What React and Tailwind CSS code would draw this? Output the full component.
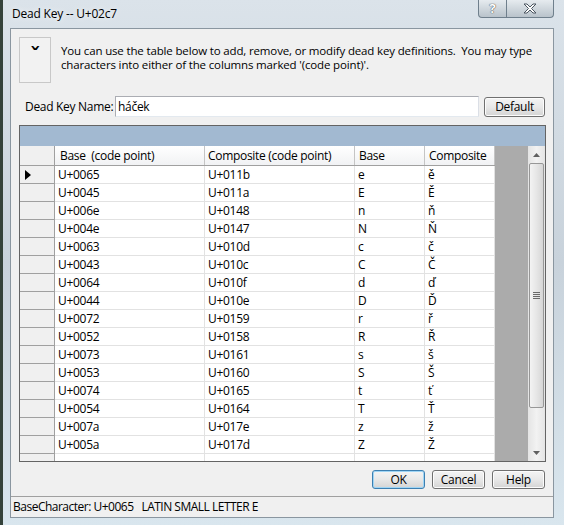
import React from 'react'

const rows = [
  ['U+0065', 'U+011b', 'e', 'ě'],
  ['U+0045', 'U+011a', 'E', 'Ě'],
  ['U+006e', 'U+0148', 'n', 'ň'],
  ['U+004e', 'U+0147', 'N', 'Ň'],
  ['U+0063', 'U+010d', 'c', 'č'],
  ['U+0043', 'U+010c', 'C', 'Č'],
  ['U+0064', 'U+010f', 'd', 'ď'],
  ['U+0044', 'U+010e', 'D', 'Ď'],
  ['U+0072', 'U+0159', 'r', 'ř'],
  ['U+0052', 'U+0158', 'R', 'Ř'],
  ['U+0073', 'U+0161', 's', 'š'],
  ['U+0053', 'U+0160', 'S', 'Š'],
  ['U+0074', 'U+0165', 't', 'ť'],
  ['U+0054', 'U+0164', 'T', 'Ť'],
  ['U+007a', 'U+017e', 'z', 'ž'],
  ['U+005a', 'U+017d', 'Z', 'Ž'],
]

function WinButton({ label, primary, className = '' }) {
  return (
    <div
      className={`flex items-center justify-center rounded-[3px] border bg-gradient-to-b from-[#f4f4f4] via-[#e8e8e8] to-[#d4d4d4] text-[12px] text-black ${
        primary ? 'border-[#3c7fb1] shadow-[inset_0_0_0_1px_#9fd5f5]' : 'border-[#707070] shadow-[inset_0_0_0_1px_#fcfcfc]'
      } ${className}`}
    >
      {label}
    </div>
  )
}

export default function App() {
  return (
    <div
      className="relative w-[564px] h-[525px] overflow-hidden bg-gradient-to-b from-[#dbe3ea] via-[#c8d2db] to-[#d9e6ee] whitespace-nowrap"
      style={{ fontFamily: '"Open Sans", "Noto Sans", sans-serif' }}
    >
      {/* desktop peeking at the left edge */}
      <div className="absolute left-0 top-0 w-[3px] h-full bg-[#34423a]" />

      {/* title bar */}
      <div className="relative h-[28px] flex items-start">
        <div className="pl-[12px] pt-[6px] text-[12px] leading-[16px] tracking-[-0.2px] text-black [text-shadow:0_0_6px_#ffffff]">
          Dead Key -- U+02c7
        </div>
        <div className="absolute top-0 left-[478px] flex">
          <div className="w-[29px] h-[18px] rounded-bl-[4px] border border-t-0 border-[#6f7f8c] bg-gradient-to-b from-[#e6ebef] to-[#b9c3cb] flex items-center justify-center">
            <span className="text-[13px] font-bold leading-none text-white [text-shadow:0_0_1px_#444,0_0_1px_#444]">?</span>
          </div>
          <div className="w-[47px] h-[18px] rounded-br-[4px] border border-l-0 border-t-0 border-[#6f7f8c] bg-gradient-to-b from-[#e6ebef] to-[#b9c3cb] flex items-center justify-center">
            <svg width="14" height="11" viewBox="0 0 14 11">
              <path d="M1 1h3l3 3 3-3h3l-4.5 4.5L13 10h-3L7 7l-3 3H1l4.5-4.5z" fill="#fff" stroke="#4a5560" strokeWidth="1" strokeLinejoin="round" />
            </svg>
          </div>
        </div>
      </div>

      {/* client area */}
      <div className="ml-[10px] w-[544px] h-[490px] bg-[#f0f0f0] border border-[#8a96a0] flex flex-col text-[12px] tracking-[-0.3px] text-black">
        {/* info */}
        <div className="flex pt-[8px] pl-[8px]">
          <div className="w-[32px] h-[46px] border border-[#c8c8c8] bg-[#f2f2f2] flex justify-center">
            <span
              className="text-[22px] font-bold leading-[22px] mt-[7px]"
              style={{ fontFamily: '"DejaVu Sans", sans-serif' }}
            >
              ˇ
            </span>
          </div>
          <div className="ml-[10px] mt-[7px] text-[11.5px] leading-[14px] tracking-[-0.15px]">
            <div>You can use the table below to add, remove, or modify dead key definitions.&nbsp; You may type</div>
            <div>characters into either of the columns marked '(code point)'.</div>
          </div>
        </div>

        {/* name row */}
        <div className="flex items-center mt-[13px] h-[21px]">
          <div className="pl-[14px] w-[104px]">Dead Key Name:</div>
          <div className="w-[364px] h-[21px] bg-white border border-[#abadb3] border-b-[#e3e9ef] border-r-[#dbdfe6] flex items-center pl-[2px]">
            háček
          </div>
          <WinButton label="Default" className="ml-[5px] w-[61px] h-[20px]" />
        </div>

        {/* grid */}
        <div className="mt-[8px] ml-[8px] w-[527px] h-[337px] border border-[#646464] bg-[#ababab] flex flex-col">
          <div className="h-[20px] bg-[#a2b9d1] shrink-0" />
          <div className="flex flex-1 min-h-0">
            <div className="w-[475px] flex flex-col overflow-hidden bg-white">
              {/* header */}
              <div className="flex h-[20px] shrink-0 border-b border-[#a0a0a0] bg-gradient-to-b from-[#ffffff] to-[#f1f2f4]">
                <div className="w-[35px] border-r border-[#a0a0a0] bg-[#f0f0f0]" />
                <div className="w-[150px] border-r border-[#c5c5c5] pl-[5px] leading-[19px]">Base&nbsp; (code point)</div>
                <div className="w-[150px] border-r border-[#c5c5c5] pl-[3px] leading-[19px]">Composite (code point)</div>
                <div className="w-[70px] border-r border-[#c5c5c5] pl-[4px] leading-[19px]">Base</div>
                <div className="w-[70px] border-r border-[#c5c5c5] pl-[4px] leading-[19px]">Composite</div>
              </div>
              {rows.map((r, i) => (
                <div key={i} className="flex h-[18px] shrink-0">
                  <div className="w-[35px] border-r border-b border-[#a0a0a0] bg-[#f0f0f0] flex items-center pl-[5px]">
                    {i === 0 && (
                      <svg width="6" height="10" viewBox="0 0 6 10">
                        <path d="M0 0l6 5-6 5z" fill="#000" />
                      </svg>
                    )}
                  </div>
                  <div className="w-[150px] border-r border-b border-[#e2e2e2] pl-[3px] leading-[17px]">{r[0]}</div>
                  <div className="w-[150px] border-r border-b border-[#e2e2e2] pl-[3px] leading-[17px]">{r[1]}</div>
                  <div className="w-[70px] border-r border-b border-[#e2e2e2] pl-[3px] leading-[17px]">{r[2]}</div>
                  <div className="w-[70px] border-r border-b border-[#e2e2e2] pl-[3px] leading-[17px]">{r[3]}</div>
                </div>
              ))}
              <div className="flex flex-1">
                <div className="w-[35px] border-r border-[#a0a0a0] bg-[#f0f0f0]" />
                <div className="w-[150px] border-r border-[#e2e2e2]" />
                <div className="w-[150px] border-r border-[#e2e2e2]" />
                <div className="w-[70px] border-r border-[#e2e2e2]" />
                <div className="w-[70px] border-r border-[#e2e2e2]" />
              </div>
            </div>
            <div className="w-[33px] bg-[#ababab]" />
            {/* scrollbar */}
            <div className="w-[17px] bg-gradient-to-r from-[#e4e4e4] via-[#f2f2f2] to-[#e4e4e4] flex flex-col items-center">
              <div className="h-[17px] w-full flex items-center justify-center">
                <svg width="7" height="4" viewBox="0 0 7 4"><path d="M0 4l3.5-4 3.5 4z" fill="#606060" /></svg>
              </div>
              <div className="w-[15px] h-[245px] rounded-[2px] border border-[#979797] bg-gradient-to-r from-[#f3f3f3] via-[#e6e6e6] to-[#d6d6d6] flex items-center justify-center">
                <div className="flex flex-col gap-[1px] mt-[20px]">
                  <div className="w-[7px] h-[1px] bg-[#6a6a6a]" />
                  <div className="w-[7px] h-[1px] bg-[#6a6a6a]" />
                  <div className="w-[7px] h-[1px] bg-[#6a6a6a]" />
                  <div className="w-[7px] h-[1px] bg-[#6a6a6a]" />
                </div>
              </div>
              <div className="flex-1" />
              <div className="h-[17px] w-full flex items-center justify-center">
                <svg width="7" height="4" viewBox="0 0 7 4"><path d="M0 0l3.5 4 3.5-4z" fill="#606060" /></svg>
              </div>
            </div>
          </div>
        </div>

        {/* buttons */}
        <div className="flex mt-[8px] ml-[361px] gap-[7px]">
          <WinButton label="OK" primary className="w-[53px] h-[19px]" />
          <WinButton label="Cancel" className="w-[53px] h-[19px]" />
          <WinButton label="Help" className="w-[53px] h-[19px]" />
        </div>

        <div className="flex-1" />

        {/* status bar */}
        <div className="h-[21px] border-t border-[#a0a0a0] flex items-center pl-[2px] whitespace-pre tracking-[-0.5px]">
          BaseCharacter: U+0065   LATIN SMALL LETTER E
        </div>
      </div>
    </div>
  )
}
